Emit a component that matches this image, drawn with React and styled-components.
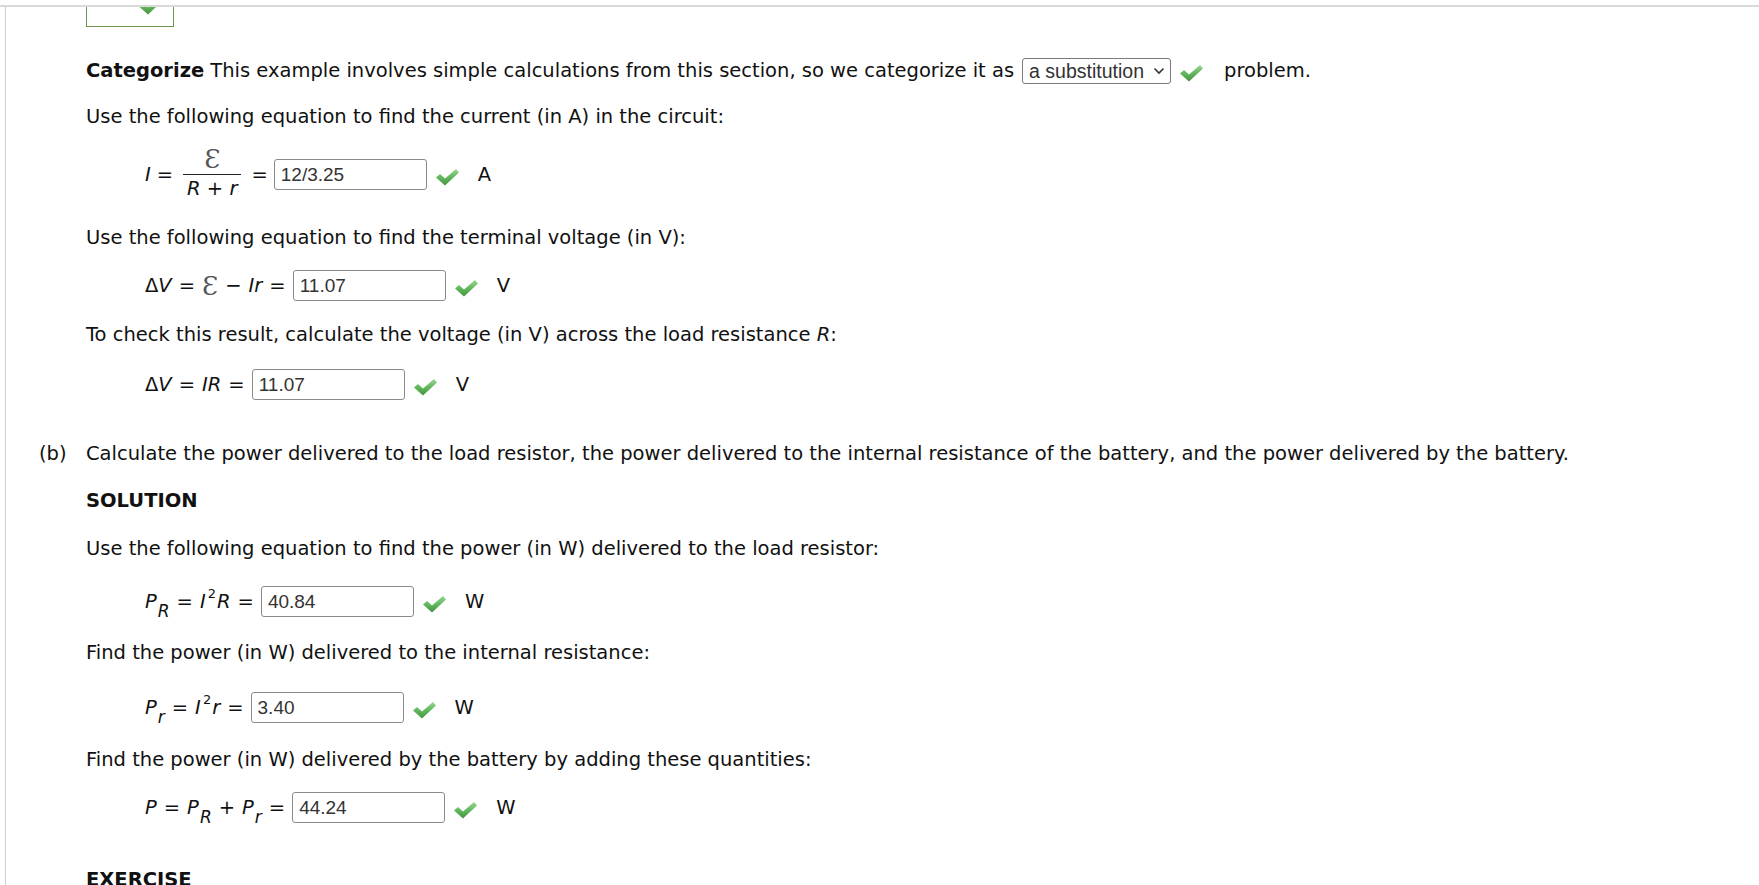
import React from "react";
import styled, { createGlobalStyle } from "styled-components";

const Global = createGlobalStyle`
  html, body { margin: 0; padding: 0; background: #fff; }
  body { font-family: "DejaVu Sans", Verdana, sans-serif; color: #111; overflow: hidden; }
`;

const Page = styled.div`
  width: 1759px;
  height: 885px;
  overflow: hidden;
  padding-top: 5px;
  box-sizing: border-box;
`;

const Frame = styled.div`
  border-top: 2px solid #d9d9d9;
  height: 100%;
  display: flex;
`;

const Rail = styled.div`
  width: 5px;
  border-right: 1px solid #cfcfcf;
  flex: none;
`;

const Body = styled.div`
  flex: 1;
  padding-left: 80px;
  overflow: hidden;
  font-size: 19.5px;
`;

const PrevBox = styled.div`
  width: 88px;
  height: 40px;
  margin-top: -20px;
  border: 1px solid #6f944f;
  border-top: none;
  box-sizing: border-box;
  display: flex;
  justify-content: flex-end;
  align-items: flex-start;
  padding-right: 10px;
  padding-top: 5px;
`;

const Line = styled.div`
  margin-top: ${(p) => p.$mt}px;
  line-height: 22px;
  height: 22px;
  white-space: nowrap;
  display: flex;
  align-items: center;
`;

const PartLine = styled(Line)`
  margin-left: -47px;
`;

const PartLabel = styled.span`
  width: 47px;
  flex: none;
`;

const Bold = styled.b`
  font-weight: bold;
  margin-right: 6px;
`;

const Select = styled.div`
  display: inline-flex;
  align-items: center;
  justify-content: space-between;
  box-sizing: border-box;
  width: 149px;
  height: 26px;
  border: 1px solid #7a7a7a;
  border-radius: 3px;
  padding: 0 5px 0 6px;
  margin: 0 8px 0 8px;
  font-family: "Liberation Sans", Arial, sans-serif;
  font-size: 19.5px;
  color: #333;
`;

const Trail = styled.span`
  margin-left: 20px;
`;

const EqRow = styled.div`
  margin-top: ${(p) => p.$mt}px;
  margin-left: 59px;
  height: 31px;
  display: flex;
  align-items: center;
  white-space: pre;
  font-size: 19.5px;
`;

const M = styled.span`
  font-style: italic;
`;

const Op = styled.span`
  margin: 0 ${(p) => p.$gap ?? 7}px;
`;

const Sub = styled.span`
  font-style: italic;
  font-size: 17px;
  position: relative;
  top: 9px;
  margin-left: 1px;
`;

const Sup = styled.span`
  font-size: 13px;
  position: relative;
  top: -8px;
  margin-left: 2px;
  margin-right: 1px;
`;

const Emf = styled.span`
  font-family: "DejaVu Serif", serif;
  font-size: 26px;
  color: #555;
  line-height: 1;
`;

const Frac = styled.span`
  display: inline-flex;
  flex-direction: column;
  align-items: center;
  margin: 0 6px 0 4px;
  position: relative;
  top: -1px;
`;

const Num = styled.span`
  padding: 0 4px 2px;
  border-bottom: 1px solid #222;
  width: 100%;
  text-align: center;
  box-sizing: border-box;
  height: 28px;
  display: flex;
  align-items: center;
  justify-content: center;
`;

const Den = styled.span`
  padding: 2px 4px 0;
  font-style: italic;
  height: 24px;
`;

const Input = styled.div`
  width: 153px;
  height: 31px;
  box-sizing: border-box;
  border: 1px solid #8a8a8a;
  border-radius: 3px;
  display: flex;
  align-items: center;
  padding-left: 6px;
  font-family: "Liberation Sans", Arial, sans-serif;
  font-size: 19px;
  color: #333;
  margin-left: ${(p) => p.$ml ?? 0}px;
`;

const Unit = styled.span`
  margin-left: 18px;
`;

const CheckWrap = styled.span`
  display: inline-flex;
  margin-left: ${(p) => p.$ml ?? 8}px;
  margin-top: 4px;
`;

const Check = ({ ml }) => (
  <CheckWrap $ml={ml}>
    <svg width="25" height="20" viewBox="0 0 25 20">
      <defs>
        <linearGradient id="cg" x1="0" y1="0" x2="0" y2="1">
          <stop offset="0" stopColor="#9ad694" />
          <stop offset="0.5" stopColor="#62b85e" />
          <stop offset="1" stopColor="#45933f" />
        </linearGradient>
      </defs>
      <path d="M1 10.5 L5 7 L10 11.5 L21 2 L24 5.5 L10 18.5 Z" fill="url(#cg)" />
    </svg>
  </CheckWrap>
);

const Chevron = () => (
  <svg width="12" height="8" viewBox="0 0 12 8">
    <path d="M1.5 1.5 L6 6 L10.5 1.5" fill="none" stroke="#333" strokeWidth="1.6" />
  </svg>
);

export default function App() {
  return (
    <Page>
      <Global />
      <Frame>
        <Rail />
        <Body>
          <PrevBox>
            <Check ml={0} />
          </PrevBox>

          <Line $mt={33}>
            <Bold>Categorize</Bold>This example involves simple calculations from this section, so we categorize it as
            <Select>
              a substitution <Chevron />
            </Select>
            <Check ml={0} />
            <Trail>problem.</Trail>
          </Line>

          <Line $mt={24}>Use the following equation to find the current (in A) in the circuit:</Line>

          <EqRow $mt={31}>
            <M>I</M>
            <Op $gap={6}>=</Op>
            <Frac>
              <Num>
                <Emf>Ɛ</Emf>
              </Num>
              <Den>R + r</Den>
            </Frac>
            <Op $gap={4}>=</Op>
            <Input $ml={2}>12/3.25</Input>
            <Check />
            <Unit>A</Unit>
          </EqRow>

          <Line $mt={37}>Use the following equation to find the terminal voltage (in V):</Line>

          <EqRow $mt={21}>
            <span>Δ</span>
            <M>V</M>
            <Op>=</Op>
            <Emf>Ɛ</Emf>
            <Op>−</Op>
            <M>Ir</M>
            <Op>=</Op>
            <Input>11.07</Input>
            <Check />
            <Unit>V</Unit>
          </EqRow>

          <Line $mt={23}>
            To check this result, calculate the voltage (in V) across the load resistance&nbsp;<M>R</M>:
          </Line>

          <EqRow $mt={23}>
            <span>Δ</span>
            <M>V</M>
            <Op>=</Op>
            <M>IR</M>
            <Op>=</Op>
            <Input>11.07</Input>
            <Check />
            <Unit>V</Unit>
          </EqRow>

          <PartLine $mt={43}>
            <PartLabel>(b)</PartLabel>
            Calculate the power delivered to the load resistor, the power delivered to the internal resistance of the
            battery, and the power delivered by the battery.
          </PartLine>

          <Line $mt={25}>
            <b>SOLUTION</b>
          </Line>

          <Line $mt={26}>Use the following equation to find the power (in W) delivered to the load resistor:</Line>

          <EqRow $mt={26}>
            <M>P</M>
            <Sub>R</Sub>
            <Op>=</Op>
            <M>I</M>
            <Sup>2</Sup>
            <M>R</M>
            <Op>=</Op>
            <Input>40.84</Input>
            <Check />
            <Unit>W</Unit>
          </EqRow>

          <Line $mt={25}>Find the power (in W) delivered to the internal resistance:</Line>

          <EqRow $mt={28}>
            <M>P</M>
            <Sub>r</Sub>
            <Op>=</Op>
            <M>I</M>
            <Sup>2</Sup>
            <M>r</M>
            <Op>=</Op>
            <Input>3.40</Input>
            <Check />
            <Unit>W</Unit>
          </EqRow>

          <Line $mt={26}>Find the power (in W) delivered by the battery by adding these quantities:</Line>

          <EqRow $mt={21}>
            <M>P</M>
            <Op>=</Op>
            <M>P</M>
            <Sub>R</Sub>
            <Op>+</Op>
            <M>P</M>
            <Sub>r</Sub>
            <Op>=</Op>
            <Input>44.24</Input>
            <Check />
            <Unit>W</Unit>
          </EqRow>

          <Line $mt={46}>
            <b>EXERCISE</b>
          </Line>
        </Body>
      </Frame>
    </Page>
  );
}
